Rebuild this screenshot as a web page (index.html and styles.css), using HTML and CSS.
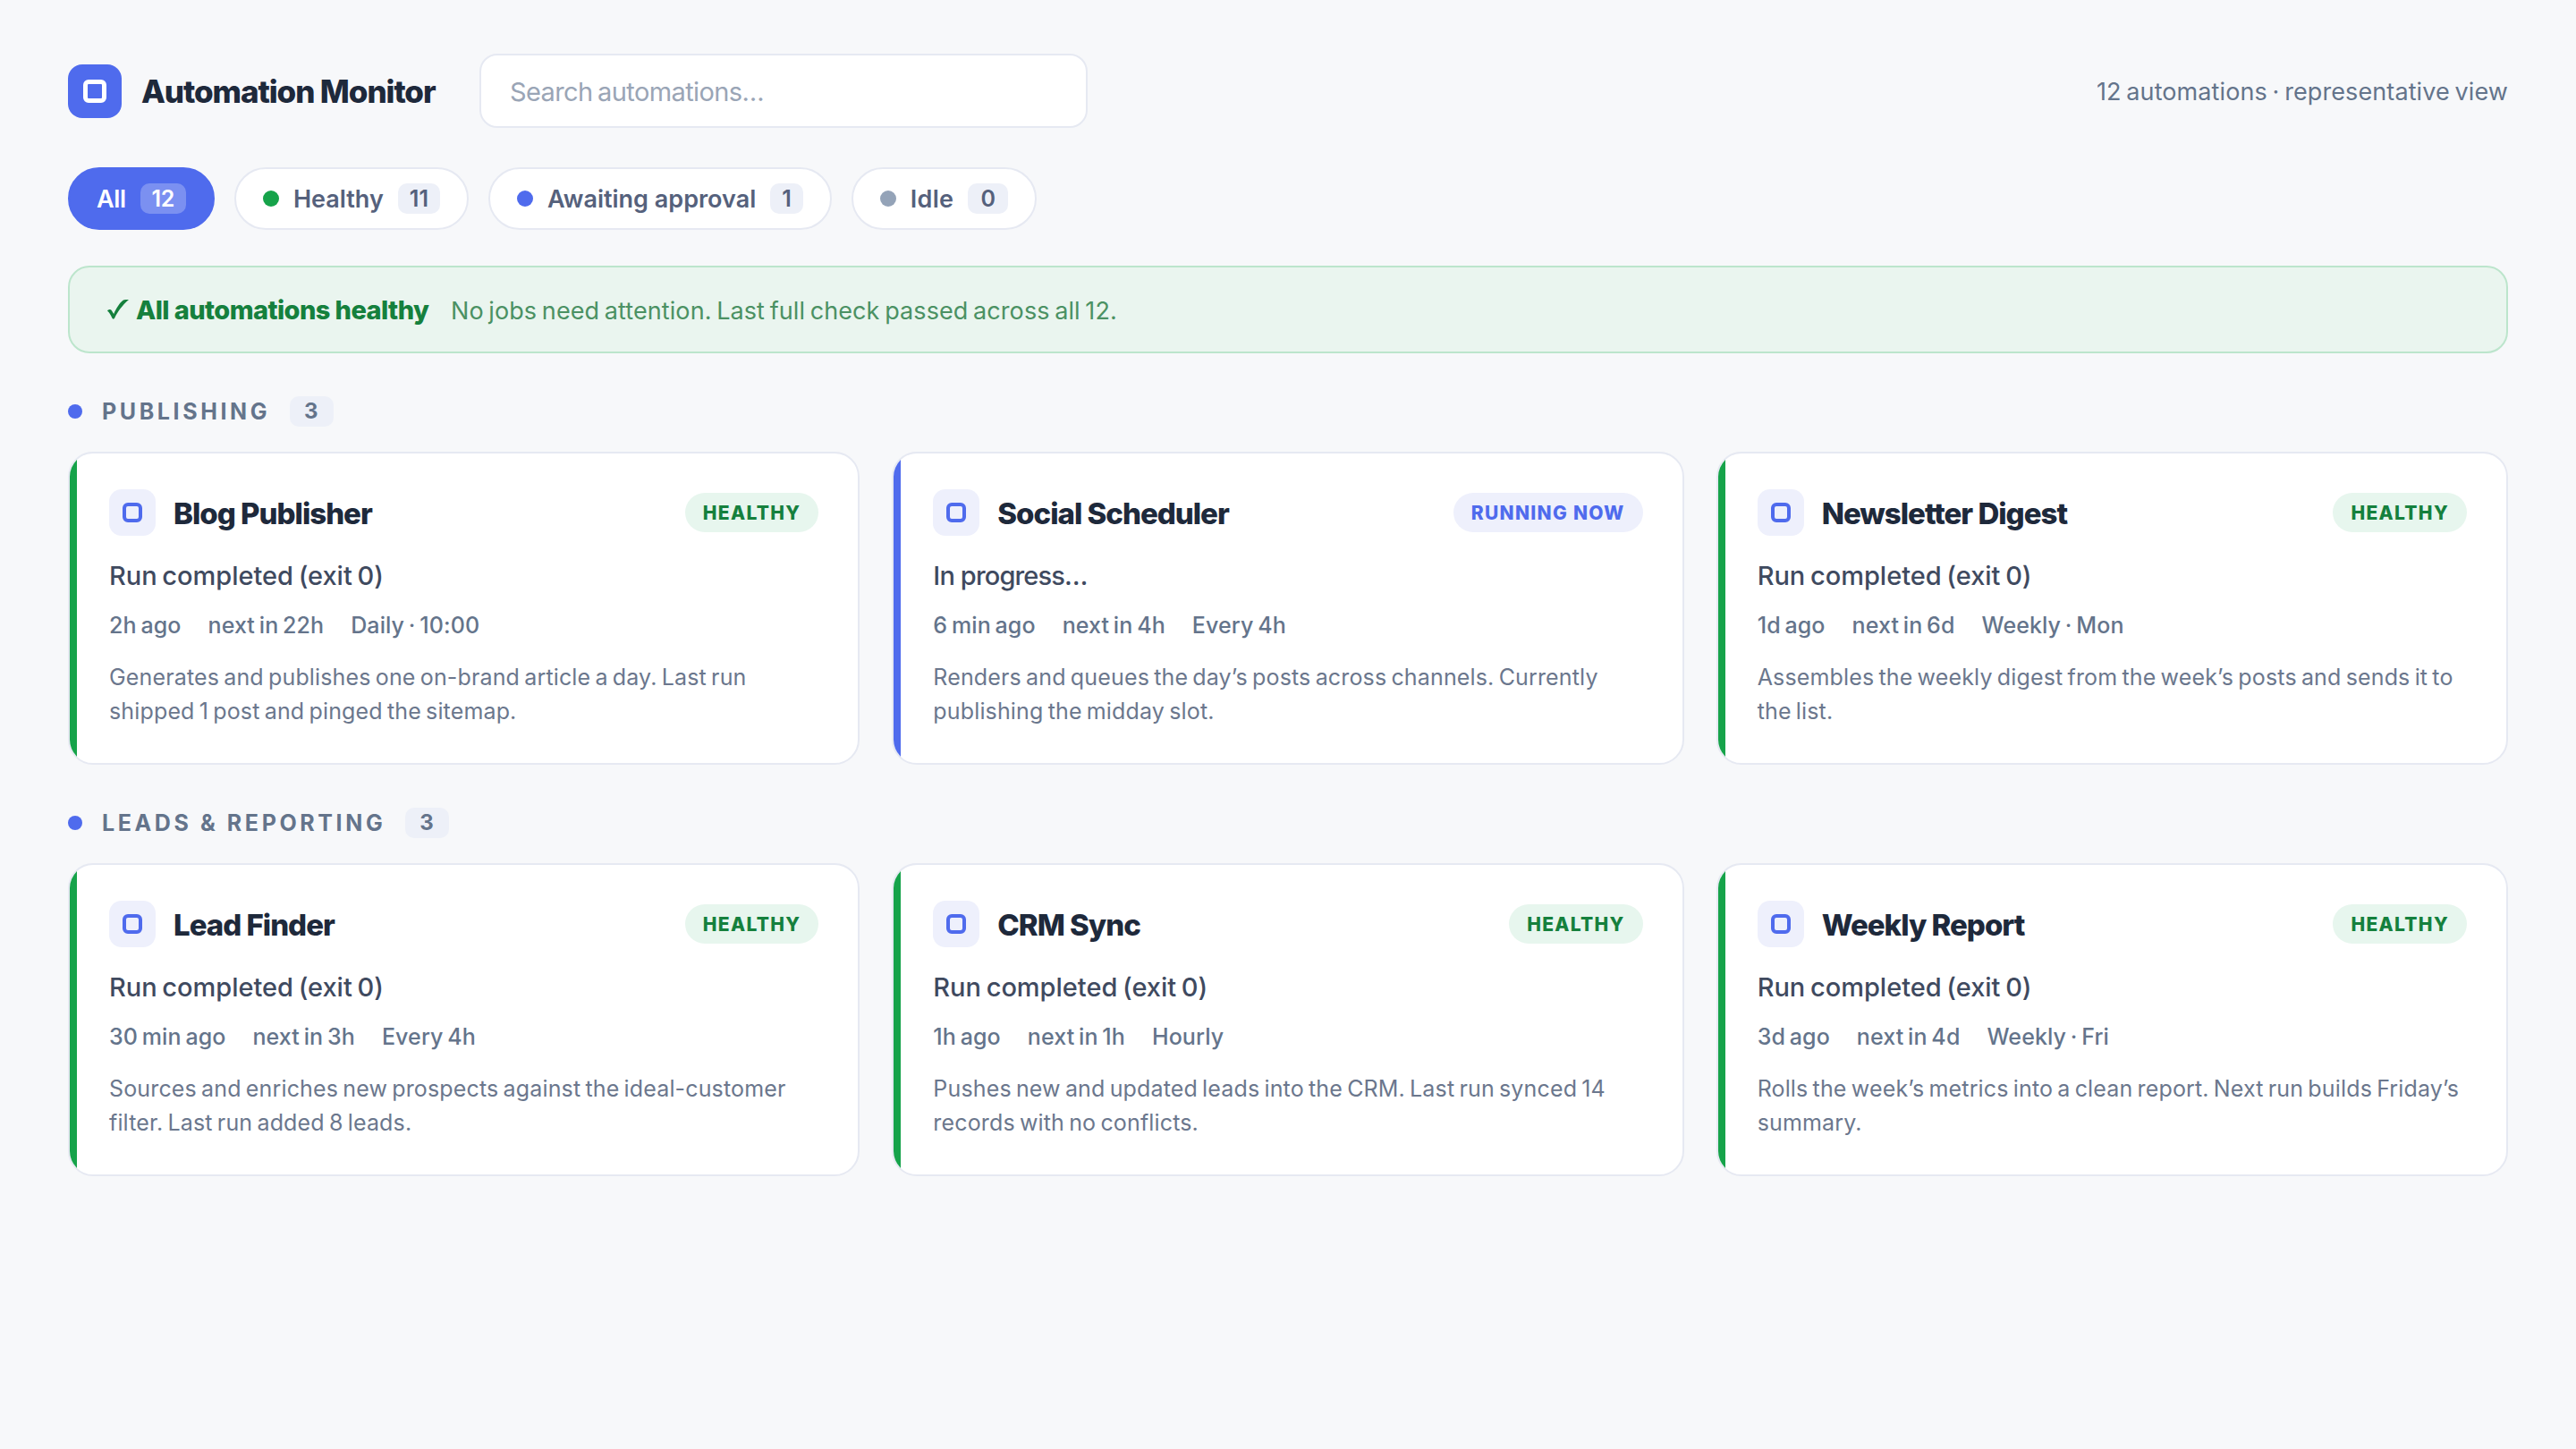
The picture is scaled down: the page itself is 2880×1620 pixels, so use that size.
FILE: index.html
```
<!DOCTYPE html>
<html lang="en">
<head>
    <meta charset="UTF-8">
    <meta name="viewport" content="width=device-width, initial-scale=1.0">
    <title>Automation Monitor</title>
    <link rel="stylesheet" href="styles.css">
</head>
<body>

    <header class="header">
        <div class="logo"><span class="logo-mark"></span></div>
        <h1>Automation Monitor</h1>
        <input type="text" class="search" placeholder="Search automations…">
        <div class="summary">12 automations · representative view</div>
    </header>

    <nav class="filters">
        <button class="chip active">All <span class="count">12</span></button>
        <button class="chip"><span class="dot green"></span>Healthy <span class="count">11</span></button>
        <button class="chip"><span class="dot blue"></span>Awaiting approval <span class="count">1</span></button>
        <button class="chip"><span class="dot gray"></span>Idle <span class="count">0</span></button>
    </nav>

    <div class="banner">
        <svg class="check" viewBox="0 0 24 22"><path d="M0 12.5 C1.5 10.5 4 10.5 5 12.5 L7.2 16 C10 9.5 14 3.5 17.5 0.8 C19 0 21.5 0 24 0 C17 6 11 14 8.2 20.5 C7.5 22 6 22 5.3 20.5 C4 17.5 2.2 14 0 12.5 Z"/></svg>
        <strong>All automations healthy</strong>
        <span class="banner-text">No jobs need attention. Last full check passed across all 12.</span>
    </div>

    <section>
        <h2><span class="section-dot"></span>Publishing <span class="count">3</span></h2>
        <div class="grid">
            <div class="card">
                <div class="card-head">
                    <span class="icon"></span>
                    <h3>Blog Publisher</h3>
                    <span class="badge">Healthy</span>
                </div>
                <div class="status">Run completed (exit 0)</div>
                <div class="meta"><span>2h ago</span><span>next in 22h</span><span>Daily · 10:00</span></div>
                <p>Generates and publishes one on-brand article a day. Last run shipped 1 post and pinged the sitemap.</p>
            </div>
            <div class="card running">
                <div class="card-head">
                    <span class="icon"></span>
                    <h3>Social Scheduler</h3>
                    <span class="badge">Running now</span>
                </div>
                <div class="status">In progress…</div>
                <div class="meta"><span>6 min ago</span><span>next in 4h</span><span>Every 4h</span></div>
                <p>Renders and queues the day’s posts across channels. Currently publishing the midday slot.</p>
            </div>
            <div class="card">
                <div class="card-head">
                    <span class="icon"></span>
                    <h3>Newsletter Digest</h3>
                    <span class="badge">Healthy</span>
                </div>
                <div class="status">Run completed (exit 0)</div>
                <div class="meta"><span>1d ago</span><span>next in 6d</span><span>Weekly · Mon</span></div>
                <p>Assembles the weekly digest from the week’s posts and sends it to the list.</p>
            </div>
        </div>
    </section>

    <section>
        <h2><span class="section-dot"></span>Leads &amp; Reporting <span class="count">3</span></h2>
        <div class="grid">
            <div class="card">
                <div class="card-head">
                    <span class="icon"></span>
                    <h3>Lead Finder</h3>
                    <span class="badge">Healthy</span>
                </div>
                <div class="status">Run completed (exit 0)</div>
                <div class="meta"><span>30 min ago</span><span>next in 3h</span><span>Every 4h</span></div>
                <p>Sources and enriches new prospects against the ideal-customer filter. Last run added 8 leads.</p>
            </div>
            <div class="card">
                <div class="card-head">
                    <span class="icon"></span>
                    <h3>CRM Sync</h3>
                    <span class="badge">Healthy</span>
                </div>
                <div class="status">Run completed (exit 0)</div>
                <div class="meta"><span>1h ago</span><span>next in 1h</span><span>Hourly</span></div>
                <p>Pushes new and updated leads into the CRM. Last run synced 14 records with no conflicts.</p>
            </div>
            <div class="card">
                <div class="card-head">
                    <span class="icon"></span>
                    <h3>Weekly Report</h3>
                    <span class="badge">Healthy</span>
                </div>
                <div class="status">Run completed (exit 0)</div>
                <div class="meta"><span>3d ago</span><span>next in 4d</span><span>Weekly · Fri</span></div>
                <p>Rolls the week’s metrics into a clean report. Next run builds Friday’s summary.</p>
            </div>
        </div>
    </section>

</body>
</html>
```
FILE: styles.css
```
*, *::before {
    box-sizing: border-box;
}
body {
    margin: 0;
    padding: 60px 76px;
    background-color: #f7f8fa;
    color: #1e293b;
    font-family: Inter, "Open Sans", sans-serif;
}
h1, h2, h3, p {
    margin: 0;
}

/* Header */
.header {
    display: flex;
    align-items: center;
    height: 83px;
}
.logo {
    display: flex;
    align-items: center;
    justify-content: center;
    width: 60px;
    height: 60px;
    border-radius: 16px;
    background-color: #4f6bed;
}
.logo-mark {
    width: 26px;
    height: 26px;
    border: 5px solid white;
    border-radius: 6px;
}
h1 {
    width: 329px;
    margin: 0 49px 0 22px;
    font-size: 35px;
    font-weight: 800;
    letter-spacing: -1.08px;
    white-space: nowrap;
}
.search {
    width: 680px;
    height: 83px;
    padding: 2px 32px 0;
    border: 2px solid #e6e9f2;
    border-radius: 20px;
    background-color: white;
    font-family: inherit;
    font-size: 29px;
    letter-spacing: -0.61px;
    word-spacing: -2px;
}
.search::placeholder {
    color: #9aa5b6;
}
.summary {
    margin-left: auto;
    padding-top: 2px;
    font-size: 27px;
    letter-spacing: 0.1px;
    word-spacing: -2px;
    color: #64748b;
}

/* Filters */
.filters {
    display: flex;
    gap: 22px;
    margin-top: 44px;
}
.chip {
    display: flex;
    align-items: center;
    gap: 16px;
    height: 70px;
    padding: 0 30px;
    border: 2px solid #e6e9f2;
    border-radius: 35px;
    background-color: white;
    color: #55617c;
    font-family: inherit;
    font-size: 27px;
    font-weight: 600;
    letter-spacing: 0;
}
.chip.active {
    border-color: #4f6bed;
    background-color: #4f6bed;
    color: white;
    letter-spacing: -0.4px;
}
.chip:last-child {
    letter-spacing: 0.3px;
}
.count {
    height: 34px;
    padding: 0 13px;
    border-radius: 10px;
    background-color: #edf0f8;
    font-size: 25px;
    line-height: 34px;
}
.chip:last-child .count {
    padding: 0 14px;
}
.active .count {
    background-color: rgba(255, 255, 255, 0.25);
}
.dot {
    width: 18px;
    height: 18px;
    border-radius: 50%;
}
.green {
    background-color: #16a34a;
}
.blue {
    background-color: #4f6bed;
}
.gray {
    background-color: #94a3b8;
}

/* Status banner */
.banner {
    display: flex;
    align-items: baseline;
    height: 98px;
    margin-top: 40px;
    padding: 0 42px;
    border: 2px solid #bce5cc;
    border-radius: 24px;
    background-color: #eaf5ef;
    color: #15803d;
    line-height: 95px;
}
.check {
    width: 24px;
    height: 22px;
    margin-right: 8px;
    fill: #15803d;
}
.banner strong {
    width: 328px;
    margin-right: 24px;
    font-size: 29px;
    font-weight: 800;
    letter-spacing: -0.58px;
    white-space: nowrap;
}
.banner-text {
    font-size: 27px;
    letter-spacing: 0.08px;
    word-spacing: -2px;
    color: #4b9163;
}

/* Sections */
section {
    margin-top: 48px;
}
h2 {
    display: flex;
    align-items: center;
    height: 34px;
    margin-bottom: 28px;
    font-size: 25px;
    font-weight: 700;
    letter-spacing: 3.6px;
    text-transform: uppercase;
    color: #64748b;
}
h2 .count {
    margin-left: 22px;
    padding: 0 16px;
    font-size: 24px;
    letter-spacing: 1px;
}
.section-dot {
    width: 16px;
    height: 16px;
    margin-right: 22px;
    border-radius: 50%;
    background-color: #4f6bed;
}
.grid {
    display: grid;
    grid-template-columns: repeat(3, 1fr);
    gap: 36px;
}

/* Cards */
.card {
    position: relative;
    overflow: hidden;
    height: 350px;
    padding: 40px 44px;
    border: 2px solid #e6e9f2;
    border-radius: 28px;
    background-color: white;
}
.card::before {
    content: "";
    position: absolute;
    top: 0;
    bottom: 0;
    left: 0;
    width: 8px;
    background-color: #16a34a;
}
.card.running::before {
    background-color: #4f6bed;
}
.card-head {
    display: flex;
    align-items: center;
    height: 52px;
}
.icon {
    display: flex;
    align-items: center;
    justify-content: center;
    width: 52px;
    height: 52px;
    margin-right: 20px;
    border-radius: 14px;
    background-color: #eef0fc;
}
.icon::before {
    content: "";
    width: 22px;
    height: 22px;
    border: 4px solid #4f6bed;
    border-radius: 6px;
}
h3 {
    padding-top: 1px;
    font-size: 33px;
    font-weight: 800;
    letter-spacing: -1px;
}
.badge {
    height: 44px;
    margin-left: auto;
    padding: 0 20px;
    border-radius: 22px;
    background-color: #e7f6ee;
    color: #15803d;
    font-size: 21px;
    font-weight: 800;
    line-height: 45px;
    letter-spacing: 1.3px;
    text-transform: uppercase;
}
.running .badge {
    background-color: #eef0fc;
    color: #4f6bed;
}
.status {
    margin-top: 27px;
    font-size: 29px;
    font-weight: 500;
    line-height: 36px;
    letter-spacing: -0.02px;
    word-spacing: -2px;
    color: #3f4a5f;
}
.running .status {
    letter-spacing: -0.85px;
    word-spacing: 0;
}
.meta {
    display: flex;
    gap: 30px;
    margin-top: 21px;
    font-size: 25px;
    font-weight: 500;
    line-height: 32px;
    letter-spacing: 0.1px;
    word-spacing: -2px;
    color: #64748b;
}
.card p {
    margin-top: 24px;
    font-size: 25px;
    line-height: 37.7px;
    letter-spacing: 0.15px;
    word-spacing: -2px;
    color: #6b778d;
}
```
